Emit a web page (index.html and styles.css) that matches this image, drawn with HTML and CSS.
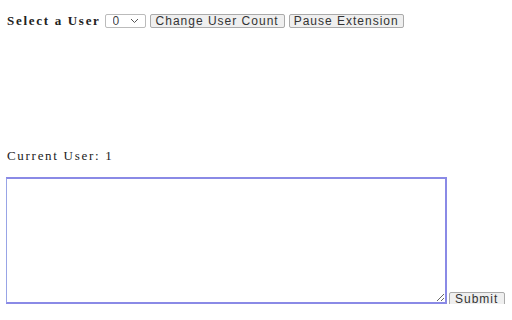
FILE: index.html
```html
<!DOCTYPE html>
<html lang="en">
<head>
    <meta charset="UTF-8">
    <title>User Select</title>
    <link rel="stylesheet" href="styles.css">
</head>
<body>
<div class="top-bar">
    <label class="user-label" for="userSelect">Select a User</label>
    <select id="userSelect" class="user-select">
        <option>0</option>
    </select>
    <button class="small-btn count-btn">Change User Count</button>
    <button class="small-btn">Pause Extension</button>
</div>

<div class="spacer"></div>

<p class="current-user">Current User: 1</p>

<div class="input-row">
    <textarea class="message-box"></textarea>
    <button class="small-btn submit-btn">Submit</button>
</div>
</body>
</html>
```

FILE: styles.css
```css
body {
    font-family: "Liberation Serif", "Times New Roman", serif;
    font-size: 13px;
    letter-spacing: 1.7px;
    margin: 6px;
    color: #222;
}
.top-bar {
    display: flex;
    align-items: center;
    gap: 4px;
    margin-top: 7px;
}
.user-label {
    font-weight: bold;
    margin-left: 1px;
}
.user-select {
    -webkit-appearance: none;
    appearance: none;
    font-family: "Liberation Sans", Arial, sans-serif;
    font-size: 12px;
    height: 14px;
    padding: 0 0 0 7px;
    width: 41px;
    line-height: 12px;
    border: 1px solid #bbb;
    border-radius: 2px;
    color: #444;
    background: #fff url("data:image/svg+xml,%3Csvg xmlns='http://www.w3.org/2000/svg' width='9' height='6'%3E%3Cpath d='M1 1l3.5 3.5L8 1' fill='none' stroke='%23555' stroke-width='1'/%3E%3C/svg%3E") no-repeat right 6px center;
}
.small-btn {
    font-family: "Liberation Sans", Arial, sans-serif;
    font-size: 12px;
    letter-spacing: 1px;
    color: #333;
    background: #efefef;
    border: 1px solid #aaa;
    border-radius: 2px;
    padding: 0 4px;
    height: 14px;
    line-height: 12px;
}
.count-btn {
    padding: 0 5px;
}
.spacer {
    height: 119px;
}
.current-user {
    margin: 0 0 13px 1px;
}
.input-row {
    display: flex;
    align-items: flex-end;
    gap: 2px;
}
.message-box {
    box-sizing: border-box;
    flex: none;
    width: 442px;
    height: 127px;
    margin: 0 0 0 -1px;
    padding: 2px;
    border: 2px solid #8a8ae6;
    border-left-color: #98a4e6;
    outline: none;
}
.submit-btn {
    flex: none;
    padding: 0 6px 0 5px;
    margin-bottom: -2px;
}
```
